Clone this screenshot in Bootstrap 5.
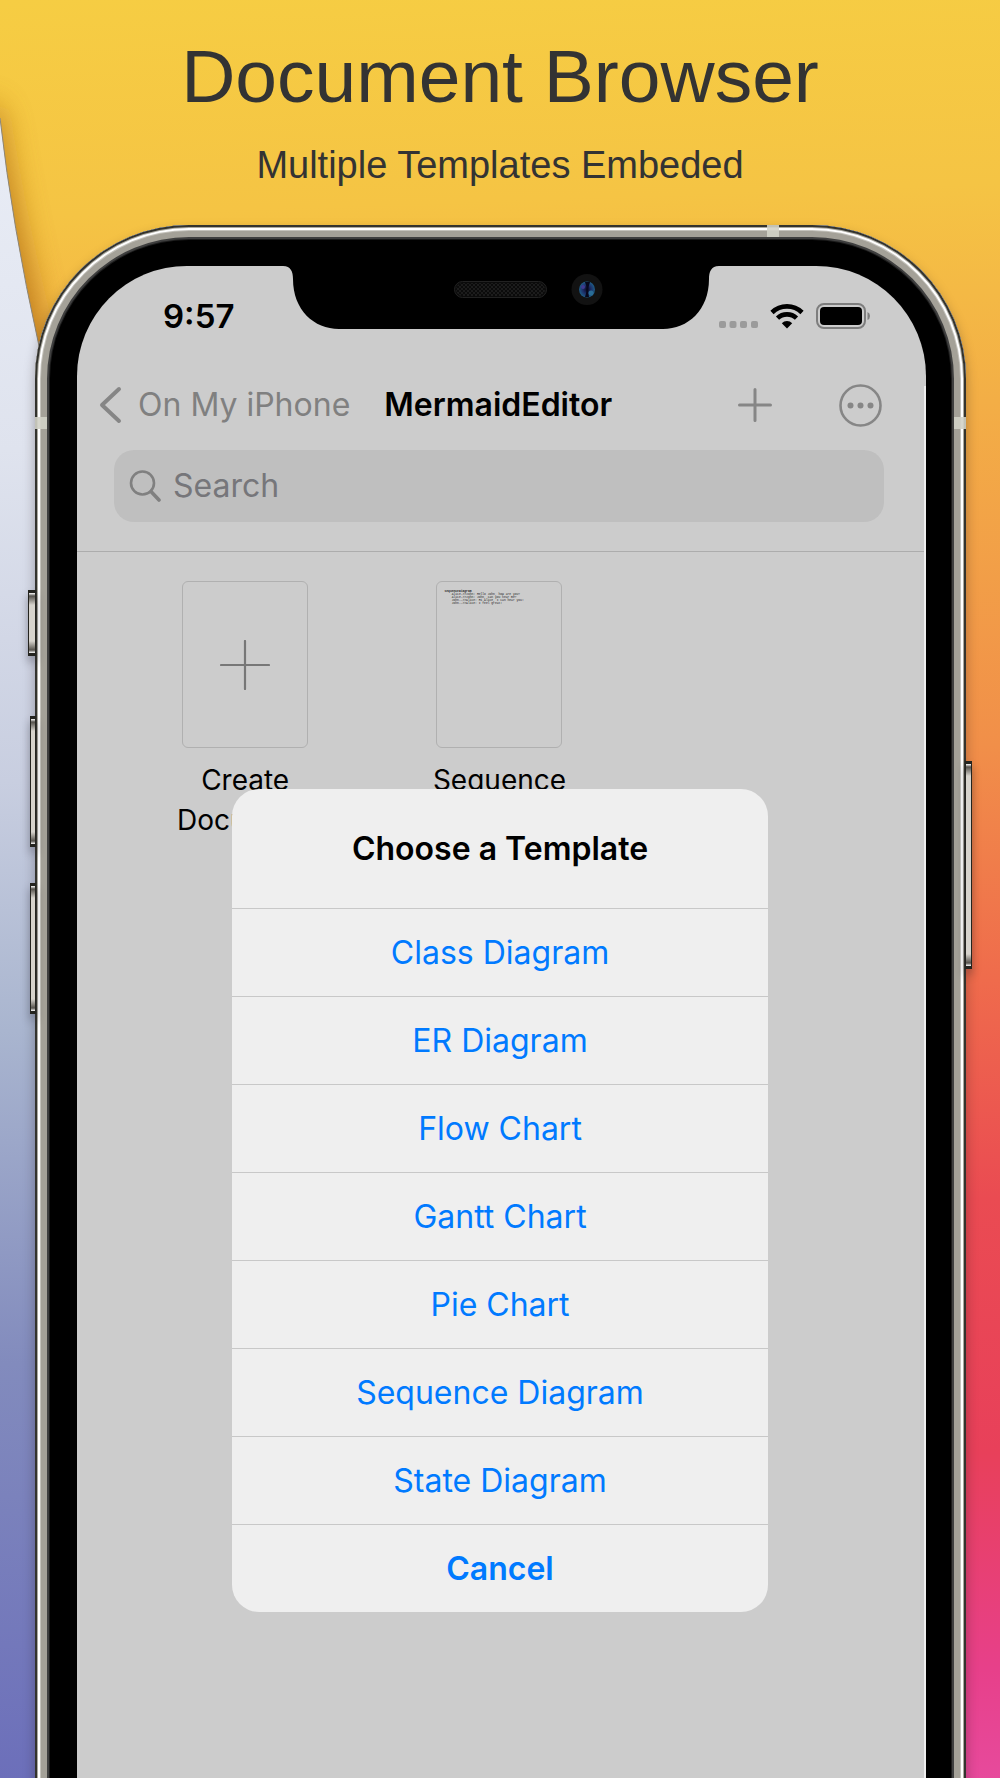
<!DOCTYPE html>
<html lang="en">
<head>
<meta charset="utf-8">
<meta name="viewport" content="width=device-width, initial-scale=1">
<title>Document Browser</title>
<link href="https://cdn.jsdelivr.net/npm/bootstrap@5.3.0/dist/css/bootstrap.min.css" rel="stylesheet">
<style>
  body { font-family: Inter, "Liberation Sans", sans-serif; color: #000; }
  .stage { background: linear-gradient(178deg, #f6cd43 0%, #f5c444 12%, #f3ae46 24%, #f18f49 43%, #ef6b4c 56%, #ea4b52 68%, #e8405a 82%, #e7408a 94%, #e74a9c 100%); }
  .backdrop { z-index: 0; }
  .hero { padding: 33px 16px 38px; font-family: "Liberation Sans", Arial, sans-serif; color: #333; z-index: 1; }
  .hero h1 { font-size: 75px; line-height: 86px; font-weight: 400; margin-bottom: 24px; }
  .hero p { font-size: 38px; line-height: 44px; }

  .phone {
    margin: 0 34px -20px 35px; padding: 41px 40px 0 42px; z-index: 1;
    border-radius: 154px 154px 0 0; background: #000;
    box-shadow: inset 0 0 0 2px #33332e, inset 0 0 0 3px #aaa89f, inset 0 0 0 5px #fff,
      inset 0 0 0 6px #c5c3bc, inset 0 0 0 12px #a4a198, inset 0 0 0 14px #3f3f3f,
      inset 0 0 0 15px #1c1c1c, 0 6px 12px rgba(40, 30, 30, .35);
  }
  .band { background: #d2d2c6; opacity: .9; }
  .band-top { top: 0; right: 187px; width: 12px; height: 12px; }
  .band-left { left: 0; top: 192px; width: 12px; height: 12px; }
  .band-right { right: 0; top: 192px; width: 12px; height: 12px; }
  .side-key { border: 2px solid #24241f; border-width: 3px 1px; box-shadow: 0 6px 8px rgba(30, 30, 40, .35);
    background: linear-gradient(#fff, #55524c 3px, #d6d3cc 12px, #d6d3cc calc(100% - 12px), #55524c calc(100% - 3px), #fff); }
  .key-mute { left: -7px; top: 365px; width: 8px; height: 66px; }
  .key-up { left: -5px; top: 491px; width: 6px; height: 131px; }
  .key-down { left: -5px; top: 658px; width: 6px; height: 131px; }
  .key-power { right: -6px; top: 536px; width: 7px; height: 208px; }

  .screen { background: #ccc; border-radius: 110px 110px 0 0; }
  .edge-light { top: 120px; right: 0; bottom: 0; width: 2px; background: #eee; }
  .status { height: 100px; }
  .clock { font-size: 33px; line-height: 40px; font-weight: 600; padding-left: 86px; }
  .status-icons { padding-right: 55px; gap: 12px; }

  .titlebar { height: 77px; padding: 1px 44px 0 22px; font-size: 32px; color: #808080; }
  .titlebar a, .titlebar button { color: inherit; text-decoration: none; }
  .titlebar .bare { background: none; border: 0; padding: 0; }
  .back { gap: 15px; margin-right: 34px; }
  .titlebar h2 { font-size: 32px; line-height: 40px; font-weight: 600; color: #000; }
  .actions { gap: 67px; }

  .search { margin: 7px 42px 29px 37px; height: 72px; padding: 0 15px; gap: 12px; border-radius: 20px; background: #bfbfbf; }
  .search input, .search input:focus { font-size: 32px; line-height: 40px; background: none; border: 0; box-shadow: none; color: #000; }
  .search input::placeholder { color: #76767a; opacity: 1; }

  .files { border-top: 1px solid #acacac; padding: 29px 45px 0 41px; }
  .tile { width: 126px; height: 167px; border: 1px solid #b0b0b0; border-radius: 6px; background: none; padding: 0; }
  .tile-text { font: 3px/3px "Liberation Mono", monospace; padding: 8px 7px; margin: 0; overflow: hidden; text-align: left; color: #222; }
  .caption { font-size: 28px; line-height: 40px; margin-top: 12px; }

  .sheet { top: 523px; width: 536px; margin: 0 auto; border-radius: 27px; background: #efefef; overflow: hidden; }
  .sheet-layer { left: 0; right: 3px; }
  .sheet h3 { font-size: 32px; line-height: 40px; font-weight: 600; padding: 40px 16px 39px; }
  .sheet .list-group-item { height: 88px; padding: 0; border: 0; border-top: 1px solid #c8c8c8; background: none; color: #007aff; font-size: 32px; line-height: 40px; }
</style>
<script src="https://cdn.jsdelivr.net/npm/bootstrap@5.3.0/dist/js/bootstrap.bundle.min.js"></script>
</head>
<body>
<main class="stage position-relative d-flex flex-column min-vh-100 overflow-hidden">

  <!-- pale sheet curling in from the left edge -->
  <svg class="backdrop position-absolute top-0 start-0 w-100 h-100" viewBox="0 0 1000 1778" preserveAspectRatio="none" aria-hidden="true">
    <defs>
      <linearGradient id="pale" x1="0" y1="118" x2="0" y2="1778" gradientUnits="userSpaceOnUse">
        <stop offset="0" stop-color="#e9edf6"/><stop offset=".2" stop-color="#dfe3ee"/>
        <stop offset=".4" stop-color="#c8cee0"/><stop offset=".55" stop-color="#a9b5cf"/>
        <stop offset=".75" stop-color="#828bbd"/><stop offset="1" stop-color="#6c6fba"/>
      </linearGradient>
      <filter id="soft" x="-200%" y="-20%" width="500%" height="140%"><feGaussianBlur stdDeviation="15"/></filter>
    </defs>
    <path d="M-20 100L0 110Q18 230 54 370L80 500H-20Z" fill="#b06a18" opacity=".8" filter="url(#soft)"/>
    <path d="M0 118Q12 225 39 346L60 430V1778H0Z" fill="url(#pale)"/>
    <path d="M0 118Q12 225 39 346" fill="none" stroke="#8c8577" stroke-width="1"/>
  </svg>

  <header class="hero position-relative text-center">
    <h1>Document Browser</h1>
    <p class="mb-0">Multiple Templates Embeded</p>
  </header>

  <section class="phone position-relative flex-grow-1 d-flex flex-column">
    <span class="side-key key-mute position-absolute"></span>
    <span class="side-key key-up position-absolute"></span>
    <span class="side-key key-down position-absolute"></span>
    <span class="side-key key-power position-absolute"></span>
    <span class="band band-top position-absolute"></span>
    <span class="band band-left position-absolute"></span>
    <span class="band band-right position-absolute"></span>

    <div class="screen position-relative flex-grow-1">
      <span class="edge-light position-absolute"></span>
      <div class="status d-flex align-items-center">
        <div class="clock flex-fill w-25">9:57</div>
        <svg class="align-self-start flex-shrink-0" width="436" height="64" viewBox="0 0 436 64" aria-hidden="true">
          <defs>
            <pattern id="mesh" width="4" height="4" patternUnits="userSpaceOnUse"><path d="M0 0h2v2h-2zM2 2h2v2h-2z" fill="#1c1c1c"/></pattern>
            <radialGradient id="lens"><stop offset="0" stop-color="#0a0a20"/><stop offset=".5" stop-color="#1c2c66"/><stop offset="1" stop-color="#1f5c86"/></radialGradient>
          </defs>
          <path d="M0 0C8 0 10 6 10 13C10 44 31 63 56 63H380C405 63 426 44 426 13C426 6 428 0 436 0Z" fill="#000"/>
          <rect x="171.500" y="15.500" width="92" height="16" rx="8" fill="#0b0b0b" stroke="#222"/>
          <rect x="173" y="17" width="89" height="13" rx="6.500" fill="url(#mesh)"/>
          <circle cx="304" cy="23.500" r="15.500" fill="#121212"/>
          <circle cx="304" cy="23.500" r="8" fill="url(#lens)"/>
          <path d="M302 16q3 7 0 15h4q-2-7 1-15z" fill="#07071a"/>
          <circle cx="300" cy="21" r="2" fill="#3f3a90"/><circle cx="308" cy="27" r="2.500" fill="#2a6d96"/>
        </svg>
        <div class="status-icons flex-fill w-25 d-flex justify-content-end">
          <svg width="39" height="26" viewBox="0 0 39 26" fill="#9b9b9b" aria-label="No signal"><rect y="18" width="7" height="7" rx="2"/><rect x="10.500" y="18" width="7" height="7" rx="2"/><rect x="21" y="18" width="7" height="7" rx="2"/><rect x="32" y="18" width="7" height="7" rx="2"/></svg>
          <svg width="34" height="26" viewBox="0 0 34 26" fill="none" stroke="#000" stroke-width="4.600" aria-label="Wi-Fi"><path d="M2 9.500A21.500 21.500 0 0 1 32 9.500"/><path d="M7.500 15.200A13.700 13.700 0 0 1 26.500 15.200"/><path d="M17 25.500L11.800 20.200A7.500 7.500 0 0 1 22.200 20.200Z" fill="#000" stroke="none"/></svg>
          <svg width="55" height="26" viewBox="0 0 55 26" aria-label="Battery full"><rect x="1" y="1" width="48" height="24" rx="7" fill="none" stroke="#7e7e7e" stroke-width="2"/><rect x="4" y="4" width="42" height="18" rx="4" fill="#000"/><path d="M51.500 9Q54 10 54 13T51.500 17Z" fill="#7e7e7e"/></svg>
        </div>
      </div>

      <nav class="titlebar d-flex align-items-center" aria-label="Folder">
        <a href="#" class="back d-flex align-items-center text-nowrap">
          <svg width="24" height="38" viewBox="0 0 24 38" fill="none" stroke="#868686" stroke-width="4" stroke-linecap="round" stroke-linejoin="round" aria-hidden="true"><path d="M20 3L3 19L20 35"/></svg>
          On My iPhone</a>
        <h2 class="mb-0">MermaidEditor</h2>
        <div class="actions d-flex align-items-center ms-auto">
          <button type="button" class="bare d-flex" aria-label="Add"><svg width="34" height="34" viewBox="0 0 34 34" stroke="#868686" stroke-width="3" stroke-linecap="round"><path d="M17 1.500V32.500M1.500 17H32.500"/></svg></button>
          <button type="button" class="bare d-flex" aria-label="More"><svg width="43" height="43" viewBox="0 0 43 43"><circle cx="21.500" cy="21.500" r="20" fill="none" stroke="#868686" stroke-width="2.600"/><g fill="#868686"><circle cx="11.500" cy="21.500" r="3"/><circle cx="21.500" cy="21.500" r="3"/><circle cx="31.500" cy="21.500" r="3"/></g></svg></button>
        </div>
      </nav>

      <label class="search d-flex align-items-center">
        <svg class="flex-shrink-0" width="32" height="32" viewBox="0 0 32 32" fill="none" stroke="#808080" aria-hidden="true"><circle cx="13.500" cy="13" r="11.500" stroke-width="2.600"/><path d="M22 21.500L30 30" stroke-width="3.600" stroke-linecap="round"/></svg>
        <input type="search" class="form-control p-0" placeholder="Search" aria-label="Search">
      </label>

      <div class="files">
        <div class="row row-cols-3 g-0 text-center">
          <div class="col">
            <button type="button" class="tile" aria-label="Create Document"><svg width="50" height="50" viewBox="0 0 50 50" stroke="#777" stroke-width="2.200" stroke-linecap="round"><path d="M25 1V49M1 25H49"/></svg></button>
            <div class="caption">Create<br>Document</div>
          </div>
          <div class="col">
            <div class="tile mx-auto"><pre class="tile-text"><b>sequenceDiagram</b>
    Alice-&gt;&gt;John: Hello John, how are you?
    Alice-&gt;&gt;John: John, can you hear me?
    John--&gt;&gt;Alice: Hi Alice, I can hear you!
    John--&gt;&gt;Alice: I feel great!</pre></div>
            <div class="caption">Sequence</div>
          </div>
        </div>
      </div>

      <div class="sheet sheet-layer position-absolute text-center" role="dialog" aria-labelledby="sheet-title">
        <h3 id="sheet-title" class="mb-0">Choose a Template</h3>
        <div class="list-group list-group-flush">
          <button type="button" class="list-group-item list-group-item-action text-center">Class Diagram</button>
          <button type="button" class="list-group-item list-group-item-action text-center">ER Diagram</button>
          <button type="button" class="list-group-item list-group-item-action text-center">Flow Chart</button>
          <button type="button" class="list-group-item list-group-item-action text-center">Gantt Chart</button>
          <button type="button" class="list-group-item list-group-item-action text-center">Pie Chart</button>
          <button type="button" class="list-group-item list-group-item-action text-center">Sequence Diagram</button>
          <button type="button" class="list-group-item list-group-item-action text-center">State Diagram</button>
          <button type="button" class="list-group-item list-group-item-action text-center fw-semibold">Cancel</button>
        </div>
      </div>
    </div>
  </section>
</main>
</body>
</html>
